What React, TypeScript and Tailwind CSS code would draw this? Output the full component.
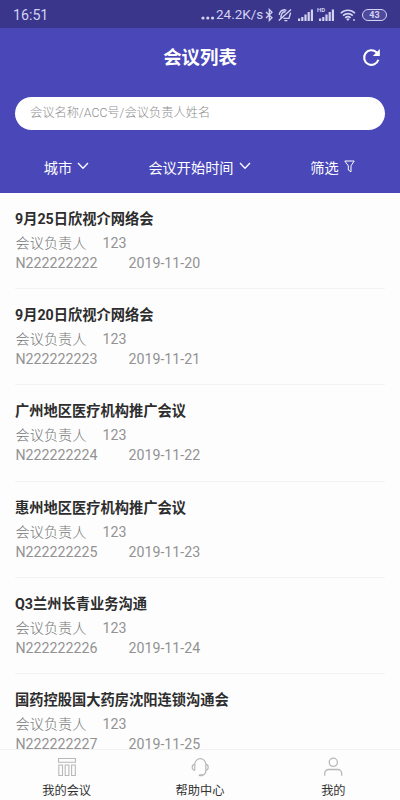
const meetings = [
  { title: "9月25日欣视介网络会", code: "N222222222", date: "2019-11-20" },
  { title: "9月20日欣视介网络会", code: "N222222223", date: "2019-11-21" },
  { title: "广州地区医疗机构推广会议", code: "N222222224", date: "2019-11-22" },
  { title: "惠州地区医疗机构推广会议", code: "N222222225", date: "2019-11-23" },
  { title: "Q3兰州长青业务沟通", code: "N222222226", date: "2019-11-24" },
  { title: "国药控股国大药房沈阳连锁沟通会", code: "N222222227", date: "2019-11-25" },
];

function Signal() {
  return (
    <svg width="16" height="12" viewBox="0 0 16 12" fill="currentColor">
      <path d="M0 9.5h2.2V12H0zM3.2 8h2.2v4H3.2zM6.4 5.5h2.2V12H6.4zM9.6 3h2.2v9H9.6zM12.8 0.5H15V12h-2.2z" />
    </svg>
  );
}

function StatusBar() {
  return (
    <div className="flex h-7 items-center bg-[#39368c] pl-[13px] pr-[13px] text-[#d3d2f2]">
      <span className="pt-[3px] text-[14.2px] leading-[25px]">16:51</span>
      <div className="ml-auto flex items-center pt-px">
        <svg width="14" height="12" viewBox="0 0 14 12" fill="currentColor">
          <circle cx="2" cy="9" r="1.6" />
          <circle cx="6.8" cy="9" r="1.6" />
          <circle cx="11.6" cy="9" r="1.6" />
        </svg>
        <span className="ml-px w-[47px] whitespace-nowrap text-[13.5px] leading-[27px]">24.2K/s</span>
        {/* bluetooth */}
        <svg width="9" height="14" viewBox="0 0 9 14" fill="none" stroke="currentColor" strokeWidth="1.3" className="ml-[2px]">
          <path d="M1 4l6 5.8-2.7 2.7v-11L7 4.2 1 10" />
        </svg>
        {/* muted bell */}
        <svg width="14" height="14" viewBox="0 0 14 14" fill="none" stroke="currentColor" strokeWidth="1.4" className="ml-[4px]">
          <path d="M1.2 6.8C1.8 4 3.8 2 6.4 1.8l2 .6M2.6 9.6l1.2-3.8C4.6 4.2 6 3.6 7.6 3.8M12.6 4.6L11 10.4H5.4M6.4 12.6h3M0.8 12.6L13 1.4" />
        </svg>
        <div className="ml-[6px]">
          <Signal />
        </div>
        <div className="relative ml-[5px]">
          <Signal />
          <span className="absolute -left-[2px] -top-[2px] bg-[#39368c] text-[6px] font-bold leading-none">HD</span>
        </div>
        {/* wifi */}
        <svg width="16" height="12" viewBox="0 0 16 12" fill="none" stroke="currentColor" strokeWidth="1.6" className="ml-[5px]">
          <path d="M0.8 4.2a10 10 0 0 1 14.2 0M3 6.6a7 7 0 0 1 9.8 0M5.2 8.9a4 4 0 0 1 5.4 0" />
          <path d="M6.2 10.1L7.9 12l1.7-1.9a2.6 2.6 0 0 0-3.4 0z" fill="currentColor" stroke="none" />
          <circle cx="14" cy="11" r="0.9" fill="currentColor" stroke="none" />
        </svg>
        <div className="ml-[6px] flex h-[12px] w-[25px] items-center justify-center rounded-full border border-[#d3d2f2] bg-[#4d4a9c] pt-px text-[9px] font-bold leading-none">
          43
        </div>
      </div>
    </div>
  );
}

function Chevron() {
  return (
    <svg width="12" height="8" viewBox="0 0 12 8" fill="none" stroke="currentColor" strokeWidth="1.3" className="mb-[3px]">
      <path d="M1 1l5 5.2L11 1" />
    </svg>
  );
}

function Header() {
  return (
    <header className="h-[165px] shrink-0 bg-[#4a48b8] text-white">
      <div className="grid h-[58px] grid-cols-[1fr_auto_1fr] items-center px-[18px]">
        <h1 className="col-start-2 pt-[2px] text-[18.4px] font-bold leading-none">会议列表</h1>
        <svg width="19" height="19" viewBox="0 0 19 19" fill="none" stroke="currentColor" strokeWidth="2.1" className="mr-px justify-self-end">
          <path d="M16.4 11.8A7.3 7.3 0 1 1 14.4 4.2L16 6" />
          <path d="M17.8 1v7h-7z" fill="currentColor" stroke="none" />
        </svg>
      </div>
      <div className="mx-[15px] mt-[11px] flex h-[33px] items-center rounded-full bg-white px-[15px]">
        <span className="text-[12.25px] font-light leading-none text-[#8e8e8e]">会议名称/ACC号/会议负责人姓名</span>
      </div>
      <div className="mt-[23px] flex h-[30px] items-center text-[14.2px] leading-none">
        <div className="flex w-[133px] items-center justify-center gap-[5px]">
          <span>城市</span>
          <Chevron />
        </div>
        <div className="flex w-[133px] items-center justify-center gap-[5px]">
          <span>会议开始时间</span>
          <Chevron />
        </div>
        <div className="flex w-[133px] items-center justify-center gap-[5px]">
          <span>筛选</span>
          <svg width="11" height="13" viewBox="0 0 11 13" fill="none" stroke="currentColor" className="mb-[4px]">
            <path d="M0.8 1h9.4L7 5.8v6L4.3 10V5.8z" />
          </svg>
        </div>
      </div>
    </header>
  );
}

function TabBar() {
  return (
    <nav className="grid h-[51px] shrink-0 grid-cols-3 border-t border-[#f1f1f1] bg-[#fdfdfd] pt-[7px] text-[12.2px] text-[#333333]">
      <div className="flex flex-col items-center gap-[5px]">
        <svg width="20" height="20" viewBox="0 0 20 20" fill="none" stroke="#b8b8b8" strokeWidth="1.1">
          <path d="M1.5 1.5h17v3.7h-17zM1.8 8h3.7v10.5H1.8zM8.2 8h3.7v10.5H8.2zM14.6 8h3.7v10.5h-3.7z" />
        </svg>
        <span className="leading-[18px]">我的会议</span>
      </div>
      <div className="flex flex-col items-center gap-[5px]">
        <svg width="20" height="20" viewBox="0 0 20 20" fill="none" stroke="#b8b8b8" strokeWidth="1.2">
          <path d="M4.8 13.5V7.2a5.5 5.5 0 0 1 11 0v6.3c0 2.9-1.4 4.3-3.4 4.6" />
          <path d="M4.8 7.4C2.8 7.6 2.2 8.7 2.2 10.3s.6 2.9 2.6 3.1M15.8 7.4c1.8.2 2.4 1.3 2.4 2.9s-.6 2.9-2.4 3.1" />
          <path d="M9.6 18.2h2.6" strokeWidth="2" strokeLinecap="round" />
        </svg>
        <span className="leading-[18px]">帮助中心</span>
      </div>
      <div className="flex flex-col items-center gap-[5px]">
        <svg width="20" height="20" viewBox="0 0 20 20" fill="none" stroke="#b8b8b8" strokeWidth="1.3">
          <circle cx="10.3" cy="5.3" r="4.1" />
          <path d="M1.7 18.7v-2.2a4 4 0 0 1 4-4h9a4 4 0 0 1 4 4v2.2" />
        </svg>
        <span className="leading-[18px]">我的</span>
      </div>
    </nav>
  );
}

export default function App() {
  return (
    <div className="flex h-[800px] w-[400px] flex-col overflow-hidden bg-[#fdfdfd] font-[Roboto,'Noto_Sans_CJK_SC',sans-serif]">
      <StatusBar />
      <Header />
      <main className="min-h-0 flex-1 overflow-hidden px-[15px]">
        {meetings.map((meeting) => (
          <div key={meeting.code} className="h-[96.2px] border-b border-[#f3f3f3] pt-[15px] text-[14.2px]">
            <h2 className="text-[14.25px] font-bold leading-[22px] text-[#2d2d2d]">{meeting.title}</h2>
            <p className="mt-[3px] flex gap-[16px] pl-[0.5px] font-light leading-5 text-[#757575]">
              <span>会议负责人</span>
              <span className="font-normal text-[#929292]">123</span>
            </p>
            <p className="flex pl-[0.5px] leading-[21px] text-[#929292]">
              <span className="w-[113px]">{meeting.code}</span>
              <span>{meeting.date}</span>
            </p>
          </div>
        ))}
      </main>
      <TabBar />
    </div>
  );
}
